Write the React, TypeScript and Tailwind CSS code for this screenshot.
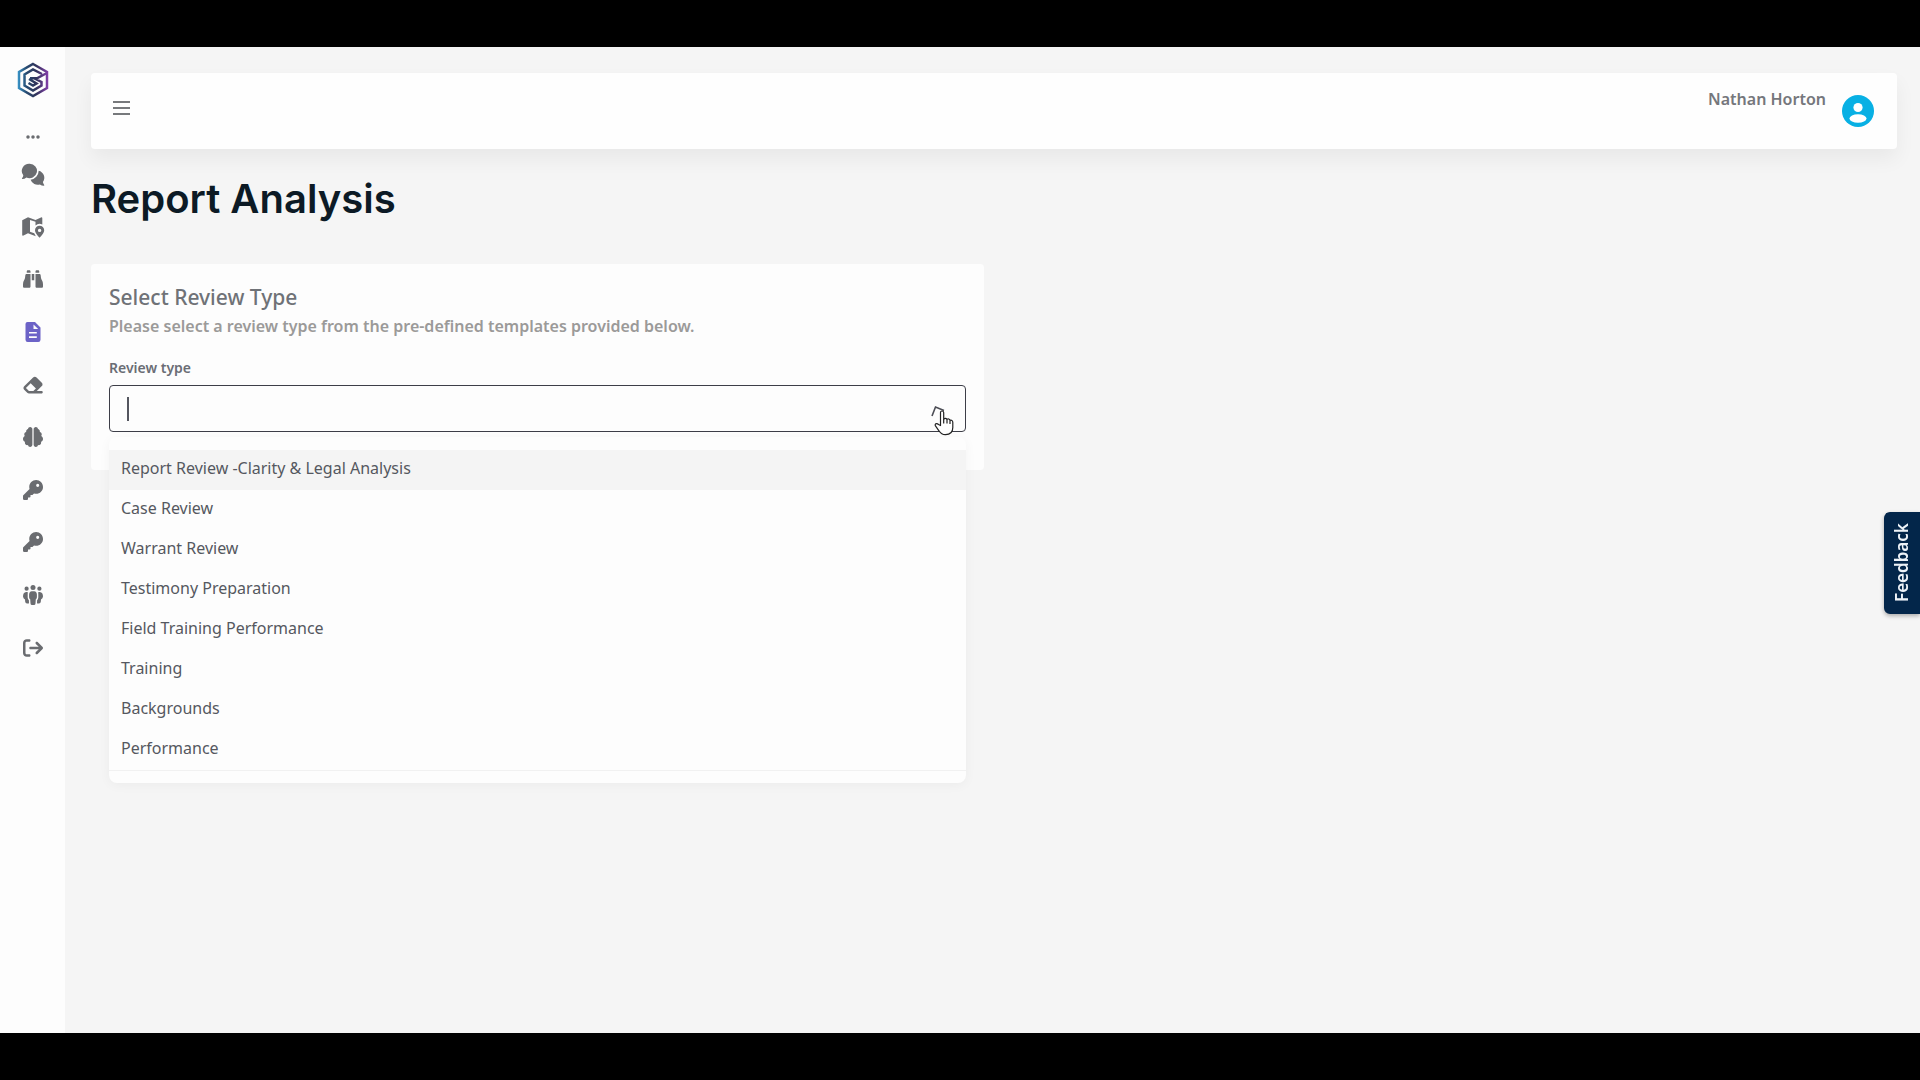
import React from "react";
import {
  FaArrowRightFromBracket,
  FaBinoculars,
  FaBrain,
  FaEllipsis,
  FaEraser,
  FaKey,
} from "react-icons/fa6";

function Logo() {
  return (
    <svg viewBox="0 0 32 36" className="h-9 w-8" fill="none" aria-hidden="true">
      <defs>
        <linearGradient id="logo" x1="0" y1="18" x2="32" y2="18" gradientUnits="userSpaceOnUse">
          <stop offset="0" stopColor="#3a9bd0" />
          <stop offset="0.3" stopColor="#274a70" />
          <stop offset="0.6" stopColor="#30345a" />
          <stop offset="1" stopColor="#8a3fb0" />
        </linearGradient>
      </defs>
      <g stroke="url(#logo)" strokeWidth="2.5" strokeLinejoin="miter">
        <path d="M16 2 30 10V26L16 34 2 26V10Z" />
        <path d="M30 11 20 16.300 13 16.300 M25 12 16 7.500 7.500 12.500V23.500L16 28.500 24.500 23.500V20L17.500 16.500M12 17 19.500 21.500 16 23.500 11.500 21" />
      </g>
    </svg>
  );
}

function CommentsIcon() {
  return (
    <svg viewBox="0 0 24 23" className="h-[23px] w-6" fill="currentColor" aria-hidden="true">
      <path d="M8.700 0.700a7.400 7.200 0 1 1-3.300 13.700Q3.600 15.900 1.300 15.900.6 15.500 1.200 14.900 2.200 13.900 2.300 12.200A7.400 7.200 0 0 1 8.700.7Z" />
      <path d="M17.700 7.800a7.200 7.200 0 0 1 4.200 11.300Q22.200 20.900 23.200 21.900 23.600 22.600 22.900 22.800 20.500 22.800 18.900 21.400A7.500 7.500 0 0 1 9.600 16.700 9.200 9.200 0 0 0 17.700 7.800Z" />
    </svg>
  );
}

function MapPinIcon() {
  return (
    <svg viewBox="0 0 24 22" className="h-[22px] w-6" fill="currentColor" aria-hidden="true">
      <path d="M1.200 4.200 7 1.300V17.300L2.500 19.600Q1.200 20.100 1.200 18.800Z" />
      <path
        fillRule="evenodd"
        d="M7 1.300 14.500 4 20 1.400Q21.300 1 21.300 2.300V8.400A6 6 0 0 0 14.500 9.500V5.800L9 3.900V15.800L13.200 17.300 14.800 20.300 7 17.300Z"
      />
      <path
        fillRule="evenodd"
        d="M18.600 9.700a4.600 4.600 0 0 1 4.600 4.600c0 2.600-2.900 5.800-4.600 7.400-1.700-1.600-4.600-4.800-4.600-7.400a4.600 4.600 0 0 1 4.600-4.600Zm0 3a1.700 1.700 0 1 0 0 3.400 1.700 1.700 0 0 0 0-3.400Z"
      />
    </svg>
  );
}

function FileIcon() {
  return (
    <svg viewBox="0 0 16 20" className="h-5 w-4" fill="currentColor" aria-hidden="true">
      <path
        fillRule="evenodd"
        d="M2.500 0H10L15.500 5.500V17.800Q15.500 20 13.300 20H2.700Q.5 20 .5 17.800V2Q.5 0 2.500 0ZM8.500 2.500V7H13.200ZM4 10V11.600H11.800V10ZM4 14.200V15.900H11.800V14.200Z"
      />
    </svg>
  );
}

function PeopleIcon() {
  return (
    <svg viewBox="0 0 20 20" className="size-5" fill="currentColor" aria-hidden="true">
      <circle cx="10" cy="2.500" r="2.500" />
      <circle cx="3.600" cy="3.700" r="2.100" />
      <circle cx="16.400" cy="3.700" r="2.100" />
      <path d="M8.800 6.300h2.400Q13.800 6.500 13.900 9.500V12.200Q13.900 13.500 12.800 14.200L12.500 18.500Q12.400 20 10.900 20H9.100Q7.600 20 7.500 18.500L7.200 14.200Q6.100 13.500 6.100 12.200V9.500Q6.200 6.500 8.800 6.300Z" />
      <path d="M4.900 7.200Q4.700 8.200 4.700 9.500V12.500Q4.700 14.200 5.900 15.200L6 18.300Q5.500 18.800 4 18.500 2.400 18.400 2.200 16.800L2 14.500Q.2 13.700 0 11.500 0 7.300 3.200 6.900Q4.300 6.800 4.900 7.200Z" />
      <path d="M15.100 7.200Q15.300 8.200 15.300 9.500V12.500Q15.300 14.200 14.100 15.200L14 18.300Q14.500 18.800 16 18.500 17.600 18.400 17.800 16.800L18 14.500Q19.800 13.700 20 11.500 20 7.300 16.800 6.900Q15.700 6.800 15.100 7.200Z" />
    </svg>
  );
}

const navItems = [
  { label: "Conversations", icon: <CommentsIcon /> },
  { label: "Map", icon: <MapPinIcon /> },
  { label: "Search", icon: <FaBinoculars size={20} /> },
  { label: "Report analysis", icon: <FileIcon />, active: true },
  { label: "Redaction", icon: <FaEraser size={22} /> },
  { label: "Insights", icon: <FaBrain size={20} /> },
  { label: "Access keys", icon: <FaKey size={20} /> },
  { label: "Admin keys", icon: <FaKey size={20} /> },
  { label: "Team", icon: <PeopleIcon /> },
  { label: "Log out", icon: <FaArrowRightFromBracket size={20} /> },
];

const reviewTypes = [
  "Report Review -Clarity & Legal Analysis",
  "Case Review",
  "Warrant Review",
  "Testimony Preparation",
  "Field Training Performance",
  "Training",
  "Backgrounds",
  "Performance",
];

function Sidebar() {
  return (
    <nav className="flex w-[65px] shrink-0 flex-col items-center bg-[#fdfdfd] pt-[15px] text-[#6a6c70]" aria-label="Main">
      <a href="#home" aria-label="Home">
        <Logo />
      </a>
      <button type="button" aria-label="More" className="mt-[31px] flex h-4 items-center">
        <FaEllipsis size={16} />
      </button>
      <ul className="mt-[3px] flex h-[526px] w-full flex-col">
        {navItems.map((item) => (
          <li key={item.label} className="flex-1">
            <a
              href="#nav"
              aria-label={item.label}
              className={
                item.active
                  ? "flex h-full items-center justify-center text-[#6c63c7]"
                  : "flex h-full items-center justify-center"
              }
            >
              {item.icon}
            </a>
          </li>
        ))}
      </ul>
    </nav>
  );
}

function Header() {
  return (
    <header className="flex h-[76px] items-center justify-between rounded bg-[#fefefe] pl-[22px] pr-[23px] shadow-[0_10px_20px_rgba(0,0,0,0.055)]">
      <button type="button" aria-label="Toggle menu" className="mb-1.5 flex w-[17px] flex-col gap-1">
        <span className="h-[2px] bg-[#77797c]" />
        <span className="h-[2px] bg-[#77797c]" />
        <span className="h-[2px] bg-[#77797c]" />
      </button>
      <div className="flex items-center gap-4">
        <span className="mb-6 font-['Noto_Sans'] text-base font-semibold leading-6 text-[#75777c]">Nathan Horton</span>
        <button type="button" aria-label="Account">
          <svg viewBox="0 0 32 32" className="size-8" aria-hidden="true">
            <circle cx="16" cy="16" r="16" fill="#08b0e4" />
            <circle cx="16" cy="12.500" r="4.600" fill="#fff" />
            <ellipse cx="16" cy="23.500" rx="8.500" ry="4.300" fill="#fff" />
          </svg>
        </button>
      </div>
    </header>
  );
}

function Cursor() {
  return (
    <svg viewBox="0 0 20 26" className="absolute right-3 top-[25px] h-[26px] w-5" aria-hidden="true">
      <path
        d="M6.500 15.500V2.500Q6.500 1 8 1T9.700 2.500V9Q11.500 7.500 13 9.300 15 8.300 16 10.300 18.800 9.800 18.800 12.500V17.500Q18.800 24.500 11.500 24.700 7.500 24.800 5.300 21.300L1.300 15.700Q.8 13.800 2.500 13.600 3.500 13.500 4.500 14.500Z"
        fill="#fff"
        stroke="#222"
        strokeWidth="1.200"
        strokeLinejoin="round"
      />
      <path d="M9.700 9V13.500M13 9.500V13.500M16 10.500V14" stroke="#222" strokeWidth="1.200" />
    </svg>
  );
}

function ReviewCard() {
  return (
    <section className="relative h-[206px] w-[893px] max-w-full rounded bg-[#fdfdfd] px-[18px] pt-[18px]">
      <h2 className="font-['Noto_Sans'] text-[21px] font-medium leading-[30px] text-[#6f7277]">Select Review Type</h2>
      <p className="mt-[2px] font-['Noto_Sans'] text-base font-semibold leading-6 text-[#9b9a99]">
        Please select a review type from the pre-defined templates provided below.
      </p>
      <label htmlFor="review-type" className="mt-5 block font-['Noto_Sans'] text-sm font-semibold leading-5 text-[#6a6d75]">
        Review type
      </label>
      <div className="relative mt-[7px]">
        <input
          id="review-type"
          type="text"
          role="combobox"
          aria-expanded="true"
          aria-controls="review-options"
          className="block h-[47px] w-full rounded border border-[#3d3e48] bg-transparent px-[18px] text-base outline-none"
        />
        <span className="absolute left-[18px] top-3 h-6 w-[2px] bg-[#54565f]" />
        <svg viewBox="0 0 14 12" className="absolute right-[21px] top-5 h-3 w-3.5" fill="none" aria-hidden="true">
          <path d="M1 11 4.500 2 13 5.500" stroke="#4c4d55" strokeWidth="1.600" />
        </svg>
        <div className="absolute left-0 top-[52px] w-full rounded-lg bg-[#fdfdfd] pb-3 pt-[13px] shadow-[0_2px_12px_rgba(0,0,0,0.045)]">
          <ul id="review-options" role="listbox" className="border-b border-[#f1f1f1]">
            {reviewTypes.map((type, i) => (
              <li
                key={type}
                role="option"
                aria-selected={i === 0}
                className={
                  i === 0
                    ? "h-10 bg-[#f4f4f4] px-3 pt-1.5 font-['Noto_Sans'] text-base leading-6 text-[#555860]"
                    : "h-10 px-3 pt-1.5 font-['Noto_Sans'] text-base leading-6 text-[#555860]"
                }
              >
                {type}
              </li>
            ))}
          </ul>
        </div>
        <Cursor />
      </div>
    </section>
  );
}

export default function App() {
  return (
    <div className="flex min-h-screen flex-col border-b-[47px] border-t-[47px] border-black bg-[#f5f5f5]">
      <div className="flex grow">
        <Sidebar />
        <main className="min-w-0 grow pl-[26px] pr-[23px] pt-[26px]">
          <Header />
          <h1 className="mb-10 mt-[25px] font-['Inter'] text-[40px] font-semibold leading-[50px] text-[#0c1a25]">
            Report Analysis
          </h1>
          <ReviewCard />
        </main>
      </div>
      <button
        type="button"
        className="fixed right-0 top-[512px] flex h-[102px] w-9 rotate-180 items-center justify-center rounded-r-md bg-[#03264a] font-['Noto_Sans'] text-[17px] font-semibold text-[#eef3f8] shadow-[0_-2px_4px_rgba(0,0,0,0.3)] [writing-mode:vertical-rl]"
      >
        Feedback
      </button>
    </div>
  );
}
